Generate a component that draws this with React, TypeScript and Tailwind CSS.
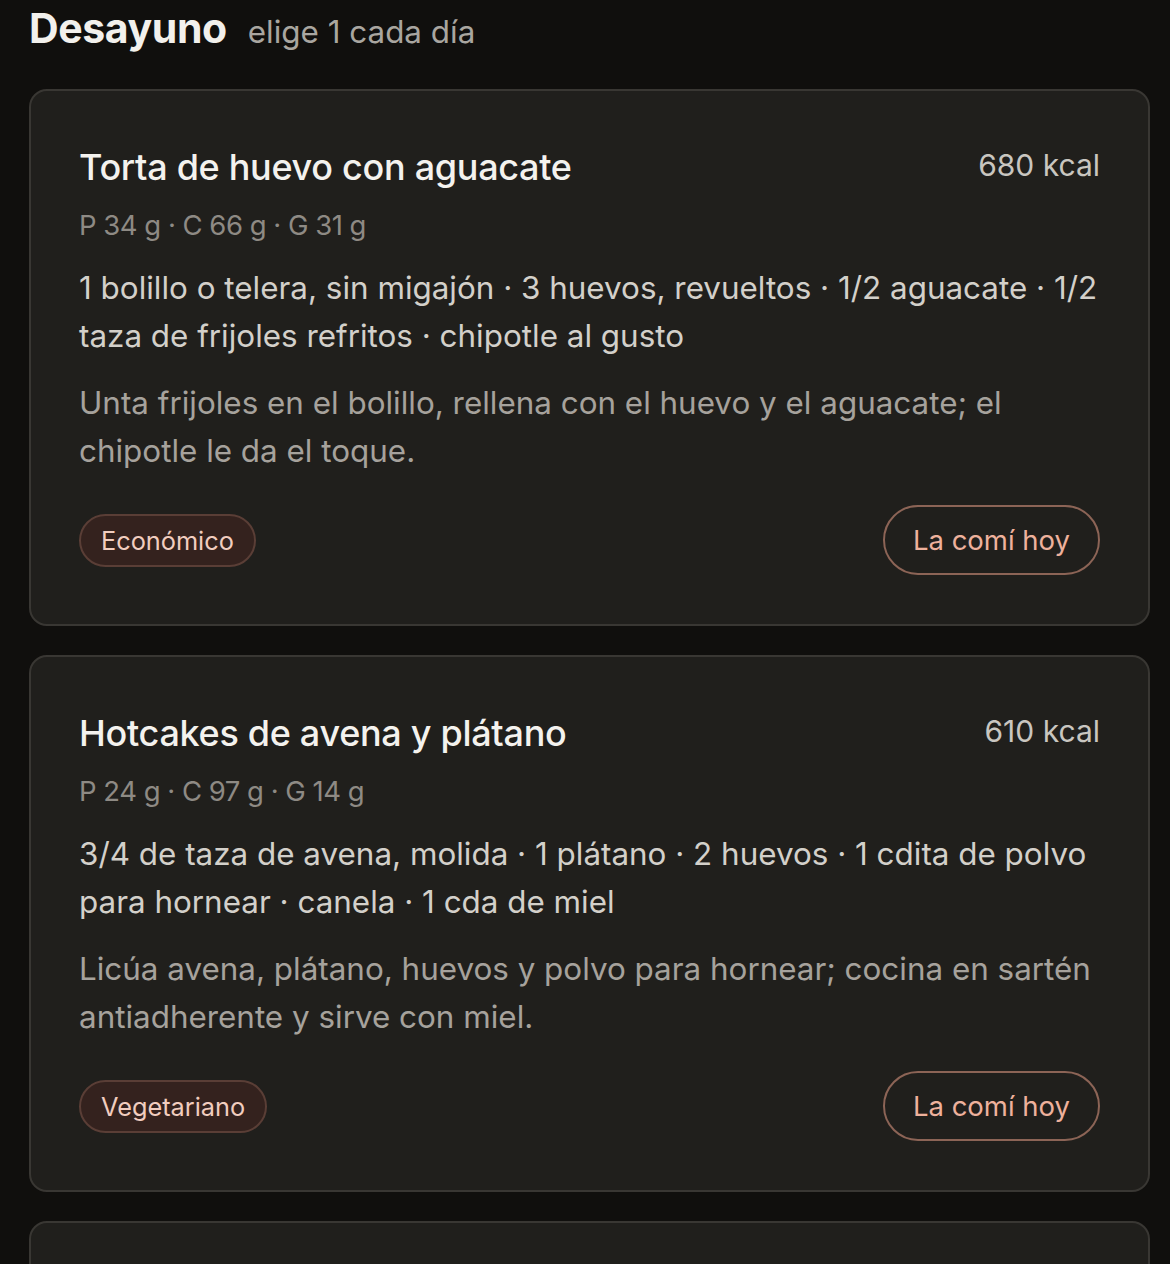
import React from "react";

type Meal = {
  name: string;
  kcal: number;
  macros: string;
  ingredients: string;
  steps: string;
  tag: string;
};

const meals: Meal[] = [
  {
    name: "Torta de huevo con aguacate",
    kcal: 680,
    macros: "P 34 g · C 66 g · G 31 g",
    ingredients:
      "1 bolillo o telera, sin migajón · 3 huevos, revueltos · 1/2 aguacate · 1/2 taza de frijoles refritos · chipotle al gusto",
    steps:
      "Unta frijoles en el bolillo, rellena con el huevo y el aguacate; el chipotle le da el toque.",
    tag: "Económico",
  },
  {
    name: "Hotcakes de avena y plátano",
    kcal: 610,
    macros: "P 24 g · C 97 g · G 14 g",
    ingredients:
      "3/4 de taza de avena, molida · 1 plátano · 2 huevos · 1 cdita de polvo para hornear · canela · 1 cda de miel",
    steps:
      "Licúa avena, plátano, huevos y polvo para hornear; cocina en sartén antiadherente y sirve con miel.",
    tag: "Vegetariano",
  },
];

const MealCard = ({ meal }: { meal: Meal }) => {
  return (
    <div className="rounded-[18px] border-2 border-[#393733] bg-[#201f1c] px-[48px] pt-[56px] pb-[49px]">
      <div className="flex items-start justify-between">
        <h3 className="text-[36px] leading-[40px] font-medium tracking-[-0.3px] text-[#f4f2ee]">
          {meal.name}
        </h3>
        <span className="text-[30px] leading-[36px] text-[#c9c6c0]">{meal.kcal} kcal</span>
      </div>
      <p className="mt-[21px] text-[27.5px] leading-[34px] tracking-[-0.5px] text-[#8e8a84]">
        {meal.macros}
      </p>
      <p className="mt-[22px] text-[31.4px] leading-[48px] text-[#d3d0ca]">{meal.ingredients}</p>
      <p className="mt-[19px] text-[31.4px] leading-[48px] text-[#a6a29c]">{meal.steps}</p>
      <div className="mt-[30px] flex items-center justify-between">
        <span className="rounded-full border-2 border-[#5a3e36] bg-[#34221e] px-[20px] py-[8px] text-[25.3px] leading-[33px] text-[#f1cdbf]">
          {meal.tag}
        </span>
        <button className="rounded-full border-2 border-[#8c6456] px-[28px] py-[16px] text-[27.5px] leading-[34px] text-[#eeb19c]">
          La comí hoy
        </button>
      </div>
    </div>
  );
};

export default function App() {
  return (
    <div
      className="h-screen overflow-hidden bg-[#100f0d] pl-[29px] pr-[20px] pt-[3px]"
      style={{ fontFamily: "Inter, 'Noto Sans', sans-serif" }}
    >
      <div className="flex items-baseline gap-[21px]">
        <h2 className="text-[41px] leading-[50px] font-bold tracking-[-0.4px] text-[#f2f0ec]">
          Desayuno
        </h2>
        <span className="text-[31.4px] leading-[50px] text-[#a9a6a0]">elige 1 cada día</span>
      </div>
      <div className="mt-[32px] flex flex-col gap-[29px]">
        {meals.map((m) => (
          <MealCard key={m.name} meal={m} />
        ))}
        <div className="h-[120px] rounded-[18px] border-2 border-[#393733] bg-[#201f1c]" />
      </div>
    </div>
  );
}
